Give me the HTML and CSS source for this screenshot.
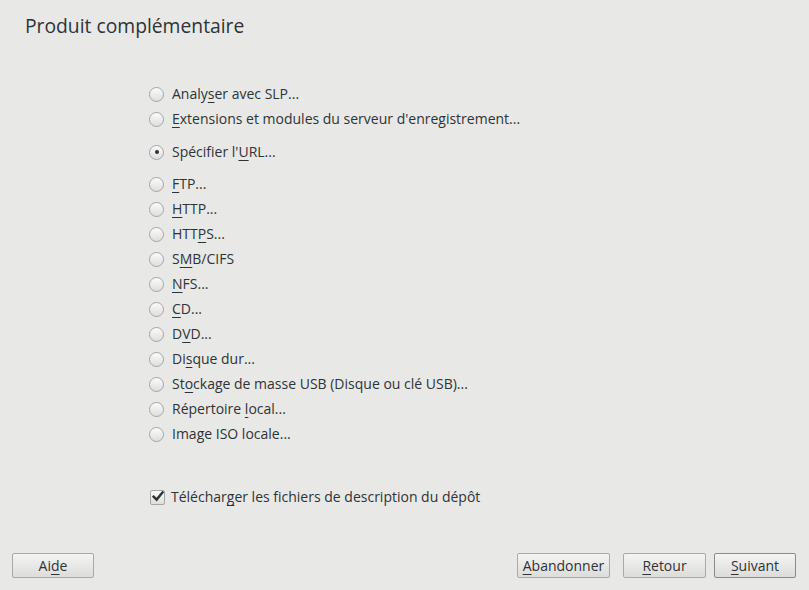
FILE: index.html
```html
<!DOCTYPE html>
<html lang="fr">
<head>
<meta charset="utf-8">
<title>Produit complémentaire</title>
<link rel="stylesheet" href="styles.css">
</head>
<body>
<div class="dialog">
  <h1 class="title">Produit complémentaire</h1>
  <div class="content">
    <div class="group g1">
      <div class="row"><span class="radio"></span><span class="label">Analy<u>s</u>er avec SLP...</span></div>
      <div class="row"><span class="radio"></span><span class="label"><u>E</u>xtensions et modules du serveur d'enregistrement...</span></div>
    </div>
    <div class="group g2">
      <div class="row"><span class="radio checked"></span><span class="label">Spécifier l'<u>U</u>RL...</span></div>
    </div>
    <div class="group">
      <div class="row"><span class="radio"></span><span class="label"><u>F</u>TP...</span></div>
      <div class="row"><span class="radio"></span><span class="label"><u>H</u>TTP...</span></div>
      <div class="row"><span class="radio"></span><span class="label">HTT<u>P</u>S...</span></div>
      <div class="row"><span class="radio"></span><span class="label">S<u>M</u>B/CIFS</span></div>
      <div class="row"><span class="radio"></span><span class="label"><u>N</u>FS...</span></div>
      <div class="row"><span class="radio"></span><span class="label"><u>C</u>D...</span></div>
      <div class="row"><span class="radio"></span><span class="label">D<u>V</u>D...</span></div>
      <div class="row"><span class="radio"></span><span class="label">Di<u>s</u>que dur...</span></div>
      <div class="row"><span class="radio"></span><span class="label">St<u>o</u>ckage de masse USB (Disque ou clé USB)...</span></div>
      <div class="row"><span class="radio"></span><span class="label">Répertoire <u>l</u>ocal...</span></div>
      <div class="row"><span class="radio"></span><span class="label">Image ISO locale...</span></div>
    </div>
    <div class="check-row">
      <span class="checkbox"><svg width="12" height="11" viewBox="0 0 12 11"><path d="M1.6 5.6 L4.6 8.6 L10.6 1.4" fill="none" stroke="#2e3436" stroke-width="2.4" stroke-linecap="square"/></svg></span>
      <span class="label">Téléchar<u>g</u>er les fichiers de description du dépôt</span>
    </div>
  </div>
  <div class="buttons">
    <button class="btn btn-help">Ai<u>d</u>e</button>
    <div class="spacer"></div>
    <button class="btn btn-abort"><u>A</u>bandonner</button>
    <button class="btn btn-back"><u>R</u>etour</button>
    <button class="btn btn-next default"><u>S</u>uivant</button>
  </div>
</div>
</body>
</html>
```

FILE: styles.css
```css
html, body {
  margin: 0;
  padding: 0;
  background: #e8e8e7;
}
body {
  font-family: "Open Sans", "DejaVu Sans", sans-serif;
  color: #2e3436;
  font-size: 14px;
}
.dialog {
  width: 809px;
  height: 590px;
  display: flex;
  flex-direction: column;
  box-sizing: border-box;
}
.title {
  margin: 0;
  padding: 12px 0 0 25px;
  height: 36px;
  font-size: 19.3px;
  font-weight: normal;
  line-height: 28px;
  color: #2e3436;
}
.content {
  flex: 1;
  padding: 33.5px 0 0 148px;
  display: flex;
  flex-direction: column;
}
.group {
  display: flex;
  flex-direction: column;
}
.g1 { margin-bottom: 8px; }
.g2 { margin-bottom: 7px; }
.row, .check-row {
  height: 25px;
  display: flex;
  align-items: center;
}
.check-row {
  margin-top: 38px;
  padding-left: 2px;
}
.label {
  white-space: nowrap;
  line-height: 20px;
}
u {
  text-decoration: underline;
  text-underline-offset: 3px;
  text-decoration-thickness: 1px;
}
.radio {
  width: 15px;
  height: 15px;
  box-sizing: border-box;
  border: 1px solid #a4a6a4;
  border-radius: 50%;
  background: linear-gradient(#fbfbfb, #dedede);
  margin: 0 8px 0 1px;
  position: relative;
  flex: none;
}
.radio.checked::after {
  content: "";
  position: absolute;
  left: 4.5px;
  top: 4.5px;
  width: 4px;
  height: 4px;
  border-radius: 50%;
  background: #2e3436;
}
.checkbox {
  width: 15px;
  height: 15px;
  box-sizing: border-box;
  border: 1px solid #a4a6a4;
  border-radius: 2px;
  background: linear-gradient(#fbfbfb, #dedede);
  margin-right: 6px;
  display: flex;
  align-items: center;
  justify-content: center;
  flex: none;
}
.checkbox svg {
  display: block;
  margin-top: -1px;
  margin-left: 1px;
}
.buttons {
  display: flex;
  align-items: center;
  padding: 0 13px 12px 12px;
  gap: 13px;
}
.spacer {
  flex: 1;
}
.btn {
  font-family: inherit;
  font-size: 14px;
  color: #2e3436;
  height: 25px;
  padding: 0;
  box-sizing: border-box;
  border: 1px solid #a8aaa8;
  border-radius: 2px;
  background: linear-gradient(#f4f4f3, #dcdcdb);
  line-height: 22px;
}
.btn-help { width: 82px; }
.btn-abort { width: 93px; }
.btn-back { width: 83px; }
.btn-next { width: 82px; margin-left: -5px; }
.btn.default {
  border-color: #8a8c8a;
}
```
